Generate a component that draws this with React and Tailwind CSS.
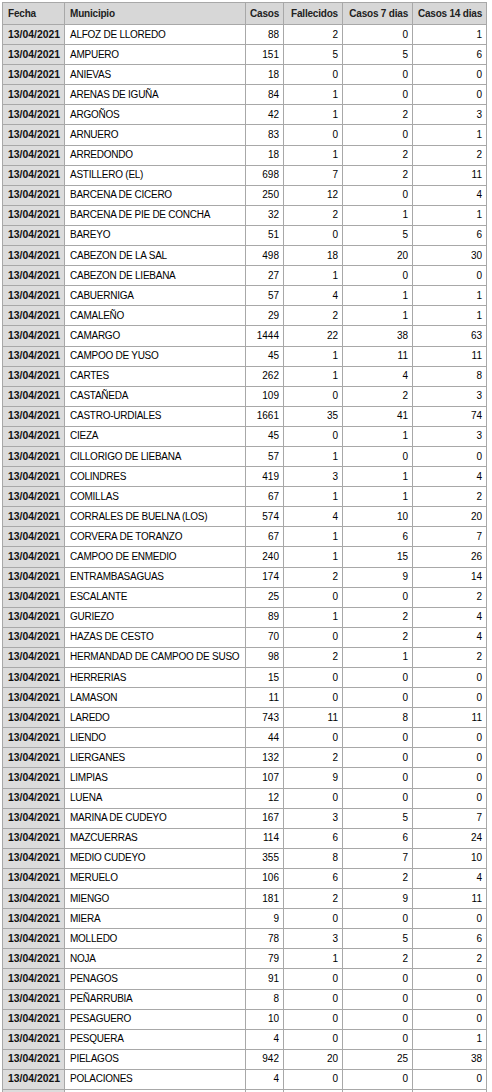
import React from "react";

const rows = [
  ["ALFOZ DE LLOREDO", 88, 2, 0, 1],
  ["AMPUERO", 151, 5, 5, 6],
  ["ANIEVAS", 18, 0, 0, 0],
  ["ARENAS DE IGUÑA", 84, 1, 0, 0],
  ["ARGOÑOS", 42, 1, 2, 3],
  ["ARNUERO", 83, 0, 0, 1],
  ["ARREDONDO", 18, 1, 2, 2],
  ["ASTILLERO (EL)", 698, 7, 2, 11],
  ["BARCENA DE CICERO", 250, 12, 0, 4],
  ["BARCENA DE PIE DE CONCHA", 32, 2, 1, 1],
  ["BAREYO", 51, 0, 5, 6],
  ["CABEZON DE LA SAL", 498, 18, 20, 30],
  ["CABEZON DE LIEBANA", 27, 1, 0, 0],
  ["CABUERNIGA", 57, 4, 1, 1],
  ["CAMALEÑO", 29, 2, 1, 1],
  ["CAMARGO", 1444, 22, 38, 63],
  ["CAMPOO DE YUSO", 45, 1, 11, 11],
  ["CARTES", 262, 1, 4, 8],
  ["CASTAÑEDA", 109, 0, 2, 3],
  ["CASTRO-URDIALES", 1661, 35, 41, 74],
  ["CIEZA", 45, 0, 1, 3],
  ["CILLORIGO DE LIEBANA", 57, 1, 0, 0],
  ["COLINDRES", 419, 3, 1, 4],
  ["COMILLAS", 67, 1, 1, 2],
  ["CORRALES DE BUELNA (LOS)", 574, 4, 10, 20],
  ["CORVERA DE TORANZO", 67, 1, 6, 7],
  ["CAMPOO DE ENMEDIO", 240, 1, 15, 26],
  ["ENTRAMBASAGUAS", 174, 2, 9, 14],
  ["ESCALANTE", 25, 0, 0, 2],
  ["GURIEZO", 89, 1, 2, 4],
  ["HAZAS DE CESTO", 70, 0, 2, 4],
  ["HERMANDAD DE CAMPOO DE SUSO", 98, 2, 1, 2],
  ["HERRERIAS", 15, 0, 0, 0],
  ["LAMASON", 11, 0, 0, 0],
  ["LAREDO", 743, 11, 8, 11],
  ["LIENDO", 44, 0, 0, 0],
  ["LIERGANES", 132, 2, 0, 0],
  ["LIMPIAS", 107, 9, 0, 0],
  ["LUENA", 12, 0, 0, 0],
  ["MARINA DE CUDEYO", 167, 3, 5, 7],
  ["MAZCUERRAS", 114, 6, 6, 24],
  ["MEDIO CUDEYO", 355, 8, 7, 10],
  ["MERUELO", 106, 6, 2, 4],
  ["MIENGO", 181, 2, 9, 11],
  ["MIERA", 9, 0, 0, 0],
  ["MOLLEDO", 78, 3, 5, 6],
  ["NOJA", 79, 1, 2, 2],
  ["PENAGOS", 91, 0, 0, 0],
  ["PEÑARRUBIA", 8, 0, 0, 0],
  ["PESAGUERO", 10, 0, 0, 0],
  ["PESQUERA", 4, 0, 0, 1],
  ["PIELAGOS", 942, 20, 25, 38],
  ["POLACIONES", 4, 0, 0, 0],
];

const th = "border border-[#a8a8a8] bg-[#d7d7d7] font-bold text-[#222] px-[5px] text-left whitespace-nowrap tracking-[-0.2px]";
const thNum = "border border-[#a8a8a8] bg-[#d7d7d7] font-bold text-[#222] px-[4px] text-right whitespace-nowrap tracking-[-0.2px]";
const td = "border border-[#a8a8a8] px-[5px] text-left whitespace-nowrap tracking-[-0.25px]";
const tdNum = "border border-[#a8a8a8] px-[4px] text-right whitespace-nowrap";

export default function App() {
  return (
    <div className="w-[492px] h-[1092px] overflow-hidden bg-white pt-[2px] pl-[2px] font-['Liberation_Sans',Arial,sans-serif] text-[10px] leading-[12px] text-black">
      <table className="border-collapse table-fixed w-[484px]">
        <colgroup>
          <col className="w-[62px]" />
          <col className="w-[181px]" />
          <col className="w-[38px]" />
          <col className="w-[59px]" />
          <col className="w-[70px]" />
          <col className="w-[74px]" />
        </colgroup>
        <thead>
          <tr className="h-[22px]">
            <th className={th}>Fecha</th>
            <th className={th}>Municipio</th>
            <th className={thNum}>Casos</th>
            <th className={thNum}>Fallecidos</th>
            <th className={thNum}>Casos 7 dias</th>
            <th className={thNum}>Casos 14 dias</th>
          </tr>
        </thead>
        <tbody>
          {rows.map((r, i) => (
            <tr key={i} className="h-[20.1px]">
              <td className="border border-[#a8a8a8] bg-[#dcdcdc] font-bold px-[5px] text-left text-[#111] text-[10.4px] whitespace-nowrap">
                13/04/2021
              </td>
              <td className={td}>{r[0]}</td>
              <td className={tdNum}>{r[1]}</td>
              <td className={tdNum}>{r[2]}</td>
              <td className={tdNum}>{r[3]}</td>
              <td className={tdNum}>{r[4]}</td>
            </tr>
          ))}
          <tr className="h-[20.1px]">
            <td className="border border-[#a8a8a8] bg-[#dcdcdc]" />
            <td className={td} />
            <td className={tdNum} />
            <td className={tdNum} />
            <td className={tdNum} />
            <td className={tdNum} />
          </tr>
        </tbody>
      </table>
    </div>
  );
}
